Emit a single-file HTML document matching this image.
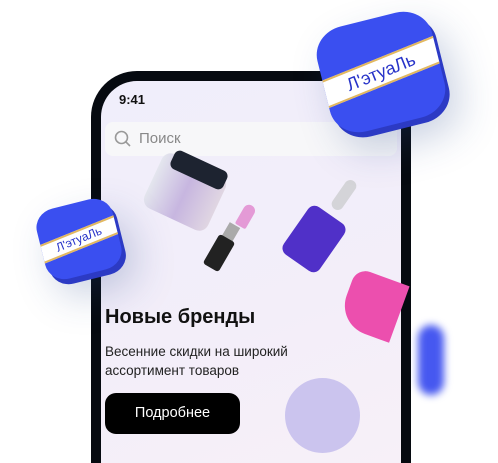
<!DOCTYPE html>
<html><head><meta charset="utf-8"><style>
*{margin:0;padding:0;box-sizing:border-box}
html,body{width:498px;height:463px;overflow:hidden}
body{background:#fff;position:relative;font-family:"Liberation Sans",sans-serif}
.phone{position:absolute;left:91px;top:71px;width:320px;height:392px;background:#060a10;border-radius:46px 46px 0 0}
.screen{position:absolute;left:101px;top:81px;width:300px;height:382px;background:linear-gradient(160deg,#f0eefb,#f3eef9 60%,#f7f0f8);border-radius:36px 36px 0 0;overflow:hidden}
.time{position:absolute;left:119px;top:92px;font-weight:bold;font-size:13px;color:#111}
.search{position:absolute;left:105px;top:122px;width:292px;height:34px;background:#f7f7f9;border-radius:8px}
.search span{position:absolute;left:34px;top:8px;font-size:15px;color:#888}
.logo{position:absolute;background:#3a4ff0;border-radius:26%;overflow:hidden;box-shadow:3px 6px 0 #2c3ac4,10px 20px 40px rgba(40,70,140,.25)}
.band{position:absolute;left:-10%;width:120%;background:#fff;border-top:2px solid #e2b860;border-bottom:2px solid #e2b860;color:#2733c8;text-align:center}
.h{position:absolute;left:105px;top:306px;font-size:20px;font-weight:bold;color:#111}
.p{position:absolute;left:105px;top:342px;font-size:13.5px;line-height:19px;color:#222}
.btn{position:absolute;left:105px;top:393px;width:135px;height:41px;background:#000;border-radius:11px;color:#fff;font-size:14.5px;text-align:center;line-height:41px}
</style></head><body>
<div class="phone"></div>
<div class="screen"></div>
<div class="time">9:41</div>
<div class="search"><svg style="position:absolute;left:9px;top:8px" width="18" height="18"><circle cx="7.5" cy="7.5" r="6" fill="none" stroke="#999" stroke-width="1.6"/><line x1="12" y1="12" x2="16" y2="16" stroke="#999" stroke-width="1.6"/></svg><span>Поиск</span></div>
<div style="position:absolute;left:150px;top:162px;width:70px;height:60px;background:linear-gradient(90deg,#e4e6ee,#c7b6e0,#e0d6e2);border-radius:10px;transform:rotate(25deg)"></div>
<div style="position:absolute;left:170px;top:160px;width:58px;height:20px;background:#1d2330;border-radius:6px;transform:rotate(25deg)"></div>
<div style="position:absolute;left:240px;top:204px;width:12px;height:24px;background:#e49ad6;border-radius:6px 6px 2px 2px;transform:rotate(30deg)"></div>
<div style="position:absolute;left:225px;top:224px;width:12px;height:16px;background:#aaa;transform:rotate(30deg)"></div>
<div style="position:absolute;left:210px;top:236px;width:18px;height:34px;background:#222;border-radius:3px;transform:rotate(30deg)"></div>
<div style="position:absolute;left:292px;top:210px;width:44px;height:58px;background:#5030c8;border-radius:8px;transform:rotate(35deg)"></div>
<div style="position:absolute;left:338px;top:178px;width:12px;height:34px;background:#d4d4d8;border-radius:6px;transform:rotate(35deg)"></div>
<div style="position:absolute;left:345px;top:275px;width:56px;height:60px;background:#ec4fae;border-radius:14px 0 0 30px;transform:rotate(20deg)"></div>
<div style="position:absolute;left:285px;top:378px;width:75px;height:75px;background:#cbc4ee;border-radius:50%"></div>
<div style="position:absolute;left:418px;top:325px;width:26px;height:70px;background:#4658f0;border-radius:14px;filter:blur(4px)"></div>
<div class="logo" style="left:322px;top:18px;width:118px;height:108px;transform:rotate(-14deg)"><div class="band" style="top:40px;height:28px;font-size:18px;line-height:24px;transform:rotate(-8deg)">Л'этуаЛь</div></div>
<div class="logo" style="left:40px;top:203px;width:78px;height:72px;transform:rotate(-14deg)"><div class="band" style="top:27px;height:19px;font-size:12px;line-height:15px;transform:rotate(-8deg)">Л'этуаЛь</div></div>
<div class="h">Новые бренды</div>
<div class="p">Весенние скидки на широкий<br>ассортимент товаров</div>
<div class="btn">Подробнее</div>
</body></html>
